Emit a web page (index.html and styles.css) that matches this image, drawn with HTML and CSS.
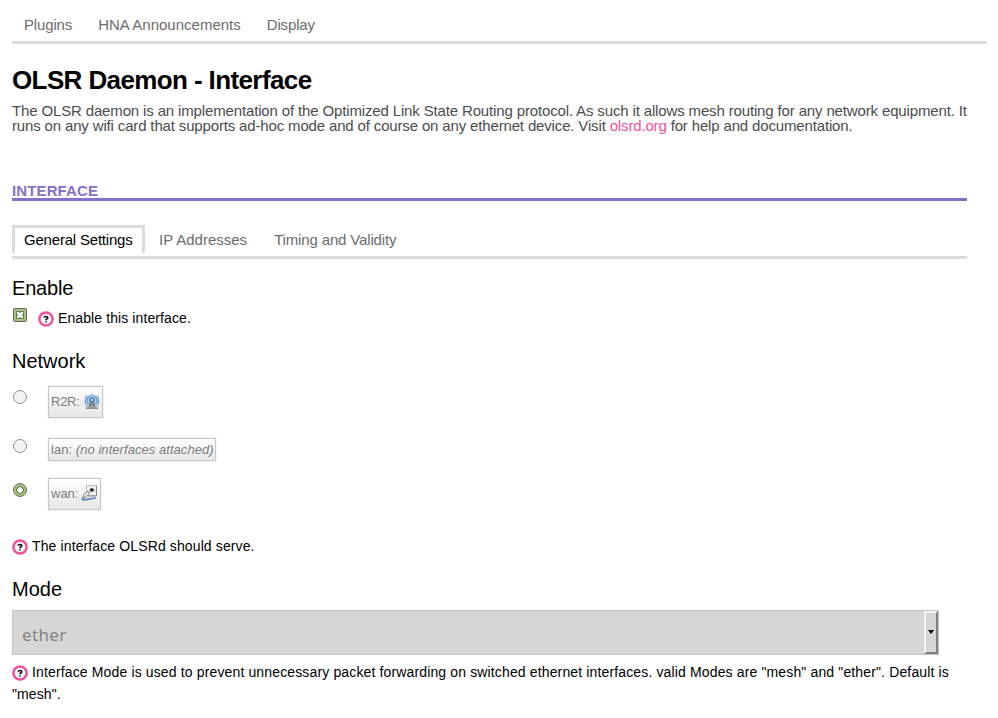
FILE: index.html
```html
<!DOCTYPE html>
<html lang="en">
<head>
<meta charset="utf-8">
<title>OLSR Daemon - Interface</title>
<link rel="stylesheet" href="styles.css">
</head>
<body>
<svg width="0" height="0" class="defs" aria-hidden="true">
  <symbol id="help" viewBox="0 0 16 16">
    <circle cx="8" cy="8" r="6.6" fill="#fff" stroke="#f0509c" stroke-width="2.5"/>
    <path d="M6 6.6C6.2 5.2 9.7 5 9.7 6.7C9.7 7.9 8 7.7 8 9.2M8 10.2V11.6" fill="none" stroke="#111" stroke-width="1.7"/>
  </symbol>
</svg>
<nav class="menu">
  <a class="m1">Plugins</a><a class="m2">HNA Announcements</a><a class="m3">Display</a>
</nav>
<main>
  <h1>OLSR Daemon - Interface</h1>
  <p class="intro"><span class="i1">The OLSR daemon is an implementation of the Optimized Link State Routing protocol. As such it allows mesh routing for any network equipment. It</span><br><span class="i2">runs on any wifi card that supports ad-hoc mode and of course on any ethernet device. Visit <a class="link">olsrd.org</a> for help and documentation.</span></p>
  <h2>INTERFACE</h2>
  <nav class="tabs">
    <a class="tab active">General Settings</a><a class="tab ip">IP Addresses</a><a class="tab timing">Timing and Validity</a>
  </nav>
  <h3 class="enable">Enable</h3>
  <div class="check">
    <svg class="box" width="14" height="14" viewBox="0 0 14 14"><rect x=".5" y=".5" width="13" height="13" rx="1.2" fill="#a5c57d" stroke="#646464"/><rect x="3.5" y="3.5" width="7" height="7" fill="#fff" stroke="#6c7f56"/><path d="M6 4h2v1H6zM6 9h2v1H6zM4 6h1v2H4zM9 6h1v2H9z" fill="#91aa75"/></svg>
    <svg class="help" width="16" height="16"><use href="#help"/></svg><span class="desc d1">Enable this interface.</span>
  </div>
  <h3 class="network">Network</h3>
  <ul class="nets">
    <li class="r2r"><i class="radio"></i><span class="badge"><span class="t1">R2R:</span>
      <svg width="16" height="16" viewBox="0 0 16 16"><circle cx="8" cy="7" r="7" fill="#c3d8ef"/><g fill="none" stroke="#6194cd" stroke-width="1.1"><path d="M3.2 12A7 7 0 0 1 3.2 2M12.8 12A7 7 0 0 0 12.8 2"/><circle cx="8" cy="6.5" r="4.8"/><circle cx="8" cy="6.3" r="2.6" fill="#3e78b9"/></g><path d="M8 6L5 13M8 6l3 7M6.3 10h3.5M5.5 12h5" fill="none" stroke="#75776f" stroke-width="1.2"/><circle cx="8" cy="6" r="1.1" fill="#eee"/><path d="M2 13.3h12v1.5H2z" fill="#777970"/></svg></span></li>
    <li class="lan"><i class="radio"></i><span class="badge"><span class="t2">lan: <em>(no interfaces attached)</em></span></span></li>
    <li class="wan"><i class="radio on"></i><span class="badge"><span class="t3">wan:</span>
      <svg width="16" height="16" viewBox="0 0 16 16"><rect x="5.5" y=".5" width="10" height="10" fill="#eeeeeb" stroke="#bfc0ba"/><path d="M15.5 1v10H7" fill="none" stroke="#8a8b87"/><path d="M8.5 4h1V3h3v1h1v3h-5z" fill="#aaa"/><path d="M9.4 3.6h2.8v2.6H9.4z" fill="#161616"/><path d="M6 6.2L2.2 10.4V12l2 .6L8.2 9V7.2z" fill="#e3e4df" stroke="#777974" stroke-width=".9"/><path d="M3 12.5Q-1 15 4 14.7L15 12.9" fill="none" stroke="#678fc5" stroke-width="1.9"/></svg></span></li>
  </ul>
  <div class="line serve"><svg class="help" width="16" height="16"><use href="#help"/></svg><span class="desc d2">The interface OLSRd should serve.</span></div>
  <h3 class="mode">Mode</h3>
  <div class="select"><span>ether</span><i class="arrow"></i></div>
  <div class="line last"><svg class="help" width="16" height="16"><use href="#help"/></svg><span class="desc d3">Interface Mode is used to prevent unnecessary packet forwarding on switched ethernet interfaces. valid Modes are "mesh" and "ether". Default is</span></div>
  <div class="desc d4">"mesh".</div>
</main>
</body>
</html>
```
FILE: styles.css
```css
* { box-sizing: border-box; }
body { margin: 0; height: 718px; overflow: hidden; background: #fff; color: #000; font-family: "Liberation Sans", Arial, sans-serif; font-size: 14px; white-space: nowrap; }
.defs { display: block; height: 0; }
.menu { display: flex; gap: 26px; margin: 0 11px 0 12px; height: 44px; padding: 16px 12px 0; border-bottom: 3px solid #dcdcdc; font-size: 15px; line-height: 18px; color: #6c6c6c; }
.m1, .m3 { letter-spacing: -0.15px; }
main { margin-left: 12px; width: 955px; }
h1, h2, h3, p, ul { margin: 0; padding: 0; font-weight: normal; }
h1 { padding-top: 21px; height: 59px; font-size: 26px; line-height: 30px; font-weight: bold; letter-spacing: -0.61px; }
.intro { font-size: 15px; line-height: 15px; color: #4c4c4c; height: 80px; }
.i1 { letter-spacing: -0.145px; }
.i2 { letter-spacing: -0.153px; }
.link { color: #f0509c; }
h2 { height: 18px; font-size: 15px; line-height: 16px; font-weight: bold; color: #8470c8; border-bottom: 3px solid #8470c8; letter-spacing: 0.12px; }
.tabs { display: flex; height: 58px; padding-top: 24px; border-bottom: 3px solid #dcdcdc; font-size: 15px; line-height: 18px; color: #6c6c6c; }
.tab { padding-top: 6px; height: 28px; }
.tab.active { width: 133px; padding: 3px 0 0 9px; border: 3px solid #dcdcdc; border-bottom: 0; color: #000; letter-spacing: -0.2px; }
.ip { margin-left: 14px; }
.timing { margin-left: 27px; letter-spacing: -0.15px; }
h3 { font-size: 20px; line-height: 24px; }
.enable { padding-top: 17px; height: 49px; letter-spacing: -0.2px; }
.check { display: flex; height: 41px; }
.box { margin: 0 11px 0 1px; }
.help { flex: none; margin-top: 3px; margin-right: 4px; }
.desc { line-height: 20px; }
.d1 { letter-spacing: 0.1px; }
.d2 { letter-spacing: 0.12px; }
.d3 { letter-spacing: 0.14px; }
.d4 { letter-spacing: 0.1px; }
.network { height: 37px; }
.nets { list-style: none; height: 150px; }
.nets li { display: flex; align-items: flex-start; }
.r2r { height: 52px; }
.lan { height: 40px; }
.radio { flex: none; width: 14px; height: 14px; margin: 4px 21px 0 1px; border: 1px solid #929292; border-radius: 50%; background: #f3f3f3; }
.lan .radio { margin-top: 1px; }
.radio.on { margin-top: 5px; border-color: #696969; background: radial-gradient(circle, #fff 0 2.5px, #607742 3px 3.5px, #a5c57d 4px); }
.wan .radio { margin-top: 5px; }
.badge { display: flex; align-items: flex-start; border: 1px solid #c6c6c6; padding: 6px 2px 0; height: 32px; color: #7d7d7d; font-size: 13px; line-height: 17px; background: linear-gradient(#fff, #e6e6e6); box-shadow: 0 0 2px rgba(0,0,0,.12); }
.badge svg { margin: 1px 0 0 4px; }
.t1 { letter-spacing: -0.25px; }
.t2 { letter-spacing: 0.05px; }
.r2r .badge { width: 55px; }
.wan .badge { width: 53px; }
.wan svg { margin-left: 3px; margin-top: 0; }
.lan .badge { height: 23px; width: 168px; padding-top: 2px; }
.line { display: flex; }
.serve { height: 41px; }
.mode { height: 33px; }
.select { width: 927px; height: 45px; border: 1px solid #c6c6c6; background: #d6d6d6; color: #858585; font: 17px/47px "Noto Sans", sans-serif; letter-spacing: 0.35px; padding-left: 9px; display: flex; justify-content: space-between; }
.arrow { width: 14px; height: 43px; border: 2px solid; border-color: #f4f4f4 #808080 #808080 #f4f4f4; display: flex; align-items: center; justify-content: center; }
.arrow::before { content: ""; margin-top: -2px; border: 3.5px solid transparent; border-top: 4px solid #000; border-bottom: 0; }
.last { margin-top: 7px; height: 22px; }
```
